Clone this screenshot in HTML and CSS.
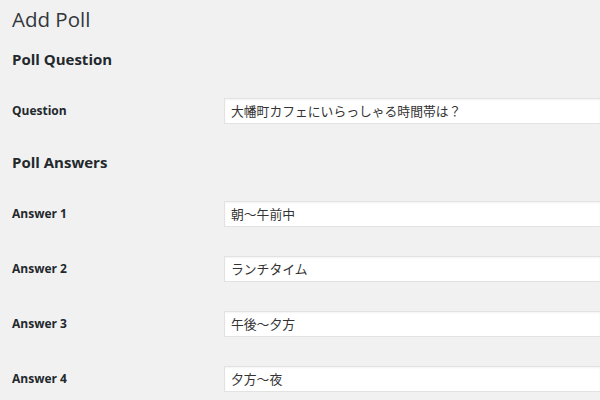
FILE: index.html
```html
<!DOCTYPE html>
<html lang="ja">
<head>
<meta charset="utf-8">
<title>Add Poll</title>
<link rel="stylesheet" href="styles.css">
</head>
<body>
<div class="wrap">
  <h1 class="title">Add Poll</h1>
  <h2 class="section">Poll Question</h2>
  <div class="rows first">
    <div class="row">
      <div class="label">Question</div>
      <div class="field">大幡町カフェにいらっしゃる時間帯は？</div>
    </div>
  </div>
  <h2 class="section answers">Poll Answers</h2>
  <div class="rows">
    <div class="row">
      <div class="label">Answer 1</div>
      <div class="field">朝～午前中</div>
    </div>
    <div class="row">
      <div class="label">Answer 2</div>
      <div class="field">ランチタイム</div>
    </div>
    <div class="row">
      <div class="label">Answer 3</div>
      <div class="field">午後～夕方</div>
    </div>
    <div class="row">
      <div class="label">Answer 4</div>
      <div class="field">夕方～夜</div>
    </div>
  </div>
</div>
</body>
</html>
```
FILE: styles.css
```css
html, body {
  margin: 0;
  padding: 0;
  background: #f1f1f1;
  overflow: hidden;
}
body {
  font-family: "Open Sans", "Noto Sans CJK JP", sans-serif;
  color: #23282d;
}
.wrap {
  padding: 5px 0 0 12px;
}
.title {
  margin: 0;
  font-size: 20.5px;
  line-height: 28px;
  font-weight: 400;
  color: #32373c;
}
.section {
  margin: 16px 0 0;
  font-size: 15px;
  line-height: 20px;
  font-weight: 700;
  color: #23282d;
}
.section.answers {
  margin-top: 28px;
}
.rows {
  display: flex;
  flex-direction: column;
  gap: 29px;
  margin-top: 29px;
}
.row {
  display: flex;
  align-items: center;
  height: 26px;
}
.label {
  width: 212px;
  flex: none;
  font-size: 12px;
  line-height: 16px;
  font-weight: 700;
  color: #23282d;
}
.field {
  flex: 1;
  min-width: 0;
  height: 26px;
  box-sizing: border-box;
  padding: 0 6px;
  background: #fff;
  border: 1px solid #e2e2e2;
  border-right: none;
  box-shadow: inset 0 1px 2px rgba(0, 0, 0, 0.05);
  font-family: "Noto Sans CJK JP", sans-serif;
  font-size: 12.8px;
  line-height: 24px;
  color: #333;
  white-space: nowrap;
  overflow: hidden;
}
```
